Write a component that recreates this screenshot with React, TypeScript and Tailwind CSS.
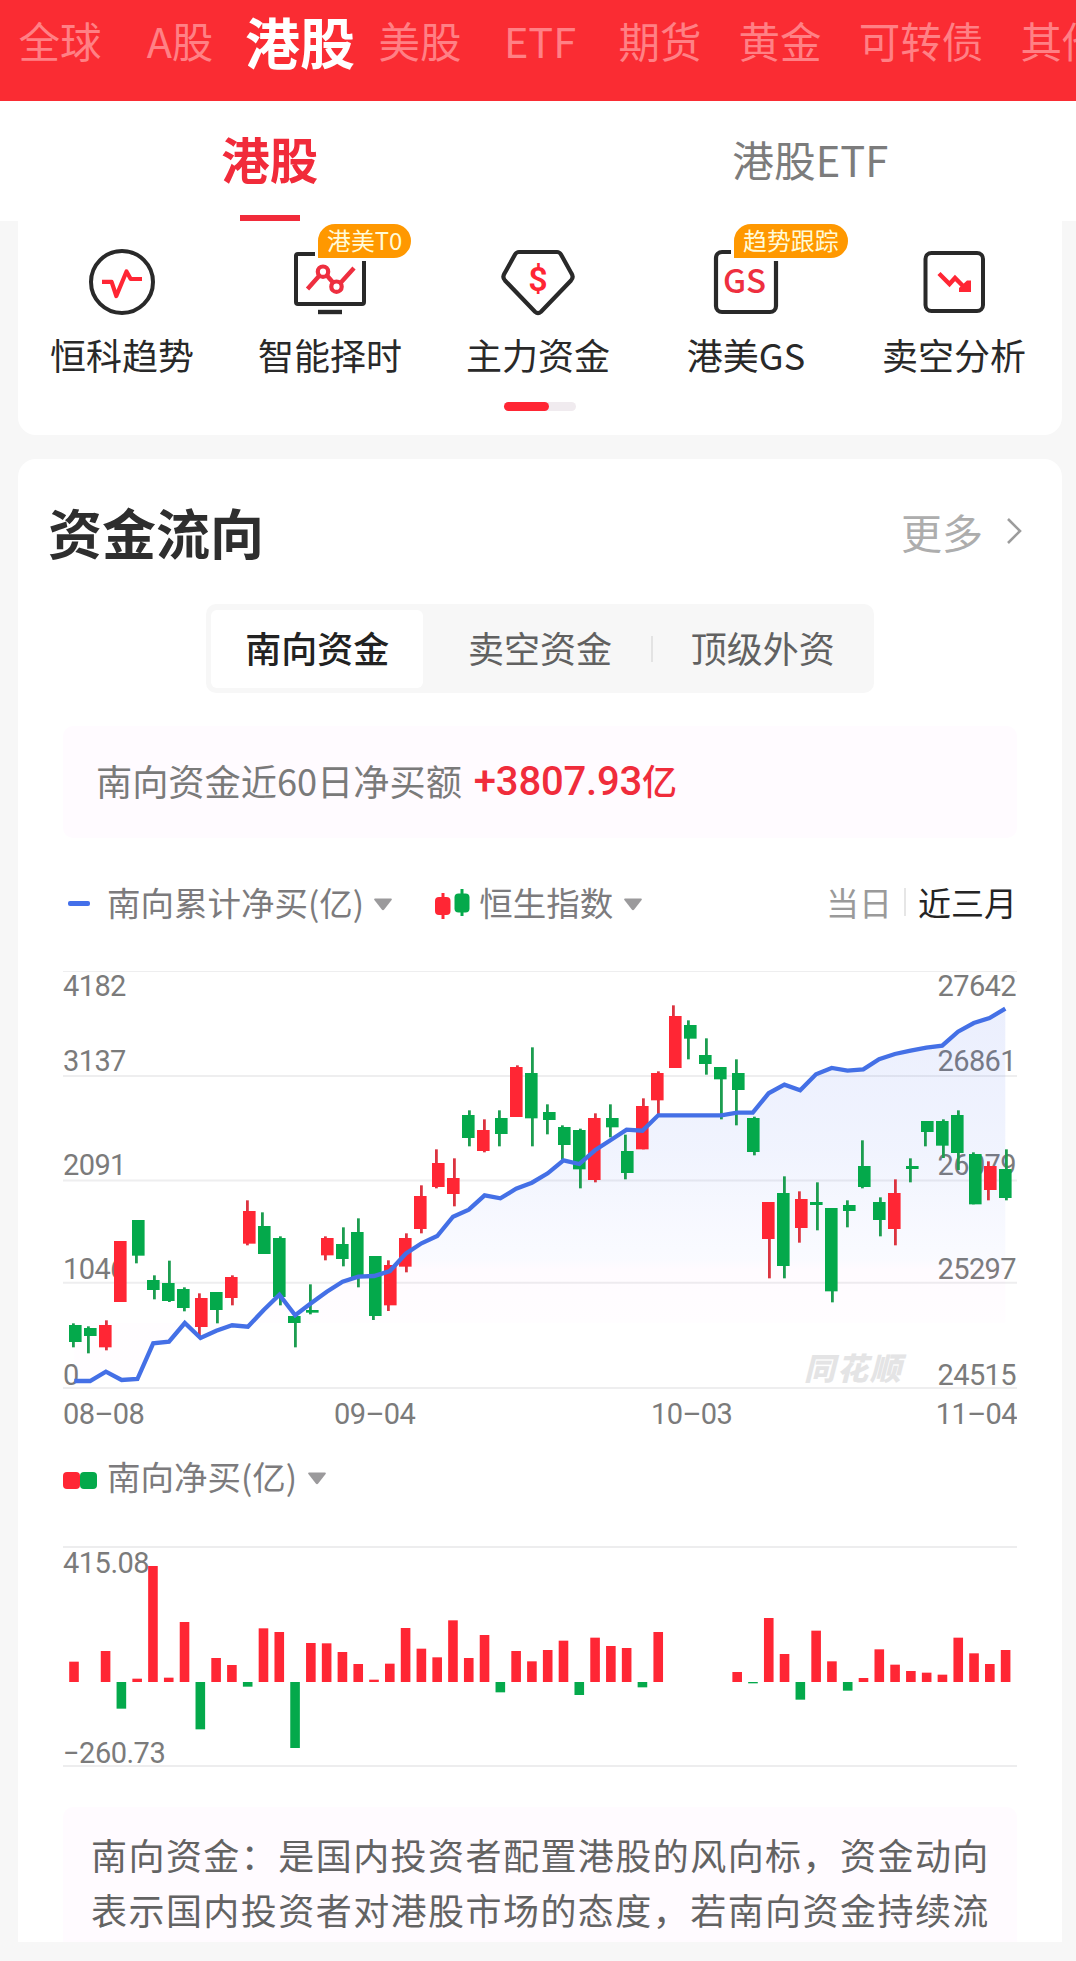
import { useState } from "react";
import type { ReactNode } from "react";
import { clsx } from "clsx";

const MARKETS = ["全球", "A股", "港股", "美股", "ETF", "期货", "黄金", "可转债", "其他"];
const FLOW_TABS = ["南向资金", "卖空资金", "顶级外资"];

// Chart geometry is kept in 3x device pixels, STEP and the x origins in css pixels
const STEP = 15.79;

type Candle = [up: 0 | 1, high: number, top: number, bottom: number, low: number];

const CANDLES: Candle[] = [
  [0, 1120, 1125, 1176, 1192], [0, 1129, 1134, 1158, 1210], [1, 1111, 1125, 1192, 1201],
  [1, 873, 873, 1056, 1056],   [0, 810, 810, 917, 940],     [0, 976, 990, 1020, 1048],
  [0, 932, 999, 1053, 1056],   [0, 1012, 1017, 1074, 1084], [1, 1030, 1044, 1131, 1160],
  [0, 1026, 1026, 1080, 1120], [1, 976, 981, 1044, 1066],   [1, 751, 783, 881, 886],
  [0, 787, 828, 912, 912],     [0, 859, 864, 1041, 1066],   [0, 1090, 1098, 1119, 1192],
  [0, 1003, 1080, 1088, 1093], [1, 859, 864, 916, 931],     [0, 832, 882, 927, 949],
  [0, 805, 846, 981, 1012],    [0, 918, 918, 1098, 1110],   [1, 931, 945, 1066, 1083],
  [1, 850, 864, 950, 967],     [1, 706, 738, 837, 850],     [1, 598, 639, 711, 715],
  [1, 625, 684, 732, 769],     [0, 481, 495, 564, 589],     [1, 508, 540, 603, 607],
  [0, 481, 504, 552, 589],     [1, 346, 351, 501, 501],     [0, 292, 369, 505, 589],
  [0, 463, 486, 510, 553],     [0, 526, 531, 585, 630],     [0, 536, 540, 658, 715],
  [1, 490, 504, 690, 697],     [0, 463, 504, 532, 562],     [0, 554, 603, 669, 688],
  [1, 445, 468, 598, 598],     [1, 364, 369, 451, 495],     [1, 166, 198, 354, 354],
  [0, 211, 225, 266, 328],     [0, 265, 315, 342, 374],     [0, 351, 351, 388, 508],
  [0, 328, 369, 420, 526],     [0, 500, 504, 606, 616],     [1, 756, 756, 867, 985],
  [0, 679, 729, 948, 985],     [1, 724, 747, 834, 878],     [0, 697, 756, 765, 841],
  [0, 774, 774, 1024, 1057],   [0, 751, 765, 783, 832],     [0, 571, 648, 711, 715],
  [0, 742, 756, 810, 859],     [1, 688, 729, 837, 886],     [0, 625, 648, 657, 697],
  [0, 513, 513, 546, 589],     [0, 508, 513, 587, 624],     [0, 481, 495, 609, 660],
  [0, 607, 612, 763, 763],     [1, 634, 648, 720, 751],     [0, 598, 657, 744, 751],
];

const NET_TOTAL = [
  1293, 1293, 1265, 1290, 1287, 1180, 1175, 1119, 1164, 1142, 1126, 1130, 1080, 1034, 1096,
  1060, 1025, 995, 980, 978, 963, 911, 880, 858, 800, 779, 736, 745, 716, 698,
  670, 631, 642, 601, 570, 539, 542, 496, 496, 496, 496, 496, 488, 488, 430,
  404, 421, 373, 354, 362, 358, 328, 312, 302, 293, 287, 245, 219, 204, 176,
];

const NET_DAILY = [
  61, 0, 93, -80, 10, 348, 13, 180, -142, 72, 51, -14, 161, 150, -198,
  117, 116, 90, 54, 7, 55, 162, 100, 74, 185, 72, 141, -31, 93, 62,
  96, 124, -39, 133, 108, 102, -16, 150, 0, 0, 0, 0, 30, -4, 192,
  84, -53, 154, 62, -26, 12, 98, 52, 33, 28, 22, 133, 86, 54, 96,
];

const RED = "#ff2634";
const GREEN = "#04a94b";

function HeartbeatIcon() {
  return (
    <svg width="80" height="76" viewBox="0 0 80 76" fill="none">
      <circle cx="40" cy="38" r="31" stroke="#292929" strokeWidth="4" />
      <path d="M20 37.8h9.6L34.3 52 44.5 27.5l4.2 7.5H60" stroke={RED} strokeWidth="4.2" strokeLinejoin="round" />
    </svg>
  );
}

function MonitorIcon() {
  return (
    <svg width="80" height="76" viewBox="0 0 80 76" fill="none">
      <rect x="6" y="10" width="68" height="50" rx="2" stroke="#292929" strokeWidth="4" />
      <path d="M28 68h24" stroke="#292929" strokeWidth="4.4" />
      <path d="M17.5 45 29.5 31.5M36.5 31 43 38.5M50 39.5 64 24" stroke="#ee2f3f" strokeWidth="4.4" />
      <circle cx="33" cy="27.7" r="5.2" stroke="#ee2f3f" strokeWidth="4.2" />
      <circle cx="46.5" cy="42.7" r="5.2" stroke="#ee2f3f" strokeWidth="4.2" />
    </svg>
  );
}

function DiamondIcon() {
  return (
    <svg width="80" height="76" viewBox="0 0 80 76" fill="none">
      <path
        d="M21 8H59Q61.5 8 63 10.5L73.5 29.5Q76 33 73 36.5L43 67.8Q40 70.5 37 67.8L7 36.5Q4 33 6.5 29.5L17 10.5Q18.5 8 21 8Z"
        stroke="#292929"
        strokeWidth="4.2"
      />
      <text x="40" y="46.5" textAnchor="middle" fill={RED} fontSize="34" fontWeight="600" fontFamily="Roboto, sans-serif">$</text>
    </svg>
  );
}

function GsIcon() {
  return (
    <svg width="80" height="76" viewBox="0 0 80 76" fill="none">
      <rect x="10" y="8" width="60" height="60" rx="6" stroke="#292929" strokeWidth="4.2" />
      <text x="38.5" y="49" textAnchor="middle" fill="#ee2f3f" fontSize="33" fontWeight="500" fontFamily="'Noto Sans CJK SC', sans-serif">GS</text>
    </svg>
  );
}

function ShortIcon() {
  return (
    <svg width="80" height="76" viewBox="0 0 80 76" fill="none">
      <rect x="11.5" y="9" width="57.5" height="58" rx="6" stroke="#292929" strokeWidth="4" />
      <path d="M25 29.5 35.5 40 41 34 50.5 43.5" stroke={RED} strokeWidth="4.4" />
      <path d="M53 36.5h4V48H45v-4Z" fill={RED} />
    </svg>
  );
}

interface Shortcut {
  label: string;
  icon: ReactNode;
  badge?: string;
}

const SHORTCUTS: Shortcut[] = [
  { label: "恒科趋势", icon: <HeartbeatIcon /> },
  { label: "智能择时", icon: <MonitorIcon />, badge: "港美T0" },
  { label: "主力资金", icon: <DiamondIcon /> },
  { label: "港美GS",   icon: <GsIcon />, badge: "趋势跟踪" },
  { label: "卖空分析", icon: <ShortIcon /> },
];

function Caret({ className }: { className?: string }) {
  return (
    <svg className={className} width="20" height="13" viewBox="0 0 20 13">
      <path d="M2 .5h16q1.6 0 .6 1.5L11.2 11.6q-1.2 1.4-2.4 0L1.4 2Q.4.5 2 .5Z" fill="#9b9a9c" />
    </svg>
  );
}

function FlowChart() {
  const y = (v: number) => v / 3 - 15;
  const points = NET_TOTAL.map((v, i) => `${(11.3 + i * 15.78).toFixed(1)},${y(v).toFixed(1)}`).join(" ");

  return (
    <svg className="block" width="954" height="470" viewBox="0 0 954 470" fontFamily="Roboto, sans-serif" fontSize="29">
      <defs>
        <linearGradient id="flow" x1="0" y1="43" x2="0" y2="358" gradientUnits="userSpaceOnUse">
          <stop offset="0" stopColor="#4a6cf0" stopOpacity="0.11" />
          <stop offset="0.45" stopColor="#4a72f5" stopOpacity="0.08" />
          <stop offset="0.8" stopColor="#6a82ff" stopOpacity="0.035" />
          <stop offset="0.83" stopColor="#ff60ff" stopOpacity="0.025" />
          <stop offset="1" stopColor="#ff60ff" stopOpacity="0.012" />
        </linearGradient>
      </defs>

      <g stroke="#eeeeef" strokeWidth="2">
        <path d="M0 6.5H954" strokeWidth="1" />
        <path d="M0 111H954M0 215.5H954M0 317.7H954M0 423H954" />
      </g>

      <g fill="#7b7b7b" letterSpacing="-0.6">
        <text x="0" y="30.5">4182</text>
        <text x="0" y="105.5">3137</text>
        <text x="0" y="209.5">2091</text>
        <text x="0" y="313.5">1046</text>
        <text x="0" y="419.5">0</text>
        <g textAnchor="end">
          <text x="953" y="30.5">27642</text>
          <text x="953" y="105.5">26861</text>
          <text x="953" y="209.5">26079</text>
          <text x="953" y="313.5">25297</text>
          <text x="953" y="419.5">24515</text>
        </g>
        <text x="0" y="458.5">08–08</text>
        <text x="271" y="458.5">09–04</text>
        <text x="588" y="458.5">10–03</text>
        <text x="954" y="458.5" textAnchor="end">11–04</text>
      </g>

      <text x="741" y="415" fill="#e4e4e5" fontSize="31" fontWeight="900" fontStyle="italic" textLength="97" fontFamily="'Noto Sans CJK SC', sans-serif">同花顺</text>

      <polygon points={`11.3,358 ${points} 942.3,358`} fill="url(#flow)" />

      {CANDLES.map(([up, high, top, bottom, low], i) => {
        const x = 3 * Math.floor((69.35 + STEP * i) / 3) - 63;
        const wick = 3 * Math.floor((74.1 + STEP * i) / 3) - 63;
        return (
          <g key={i} fill={up ? RED : GREEN}>
            <rect x={wick} y={y(high)} width="2.8" height={(low - high) / 3} fill={up ? "#dc3440" : "#1c9d50"} />
            <rect x={x} y={y(top)} width="12.6" height={Math.max((bottom - top) / 3, 2)} />
          </g>
        );
      })}

      <polyline points={points} fill="none" stroke="#4470e6" strokeWidth="4.3" />
    </svg>
  );
}

function NetBuyChart() {
  return (
    <svg className="block" width="954" height="228" viewBox="0 0 954 228" fontFamily="Roboto, sans-serif" fontSize="29">
      <path d="M0 2H954M0 221H954" stroke="#ededee" strokeWidth="2" />
      <g fill="#7b7b7b" letterSpacing="-0.5">
        <text x="0" y="27.7">415.08</text>
        <text x="0" y="218.3">−260.73</text>
      </g>
      {NET_DAILY.map((v, i) =>
        v === 0 ? null : (
          <rect
            key={i}
            x={6.2 + STEP * i}
            y={v > 0 ? 137 - v / 3 : 137}
            width="9.6"
            height={Math.abs(v) / 3}
            fill={v > 0 ? RED : GREEN}
          />
        )
      )}
    </svg>
  );
}

export default function App() {
  const [market, setMarket] = useState("港股");
  const [flow,   setFlow]   = useState("南向资金");

  return (
    <div className="w-[1076px] h-[1961px] overflow-hidden bg-[#f7f7f7] font-['Noto_Sans_CJK_SC',sans-serif]">
      {/* Markets */}
      <nav className="flex h-[101px] items-start overflow-hidden bg-[#fa2c33]">
        {MARKETS.map((name) => (
          <button
            key={name}
            onClick={() => setMarket(name)}
            className={clsx(
              "h-[80px] shrink-0 whitespace-nowrap text-center",
              name === "可转债" ? "w-[162px]" : "w-[120px]",
              name === market ? "text-[55px] leading-[79px] font-bold text-white" : "text-[41.5px] leading-[80px] text-[#ff8085]"
            )}
          >
            {name}
          </button>
        ))}
      </nav>

      {/* Sub tabs */}
      <div className="grid h-[120px] grid-cols-2 bg-white pl-[1px]">
        <div className="flex flex-col items-center justify-between">
          <span className="mt-[9px] text-[48.5px] leading-[96px] font-bold text-[#f12b3a]">港股</span>
          <span className="h-[6px] w-[60px] bg-[#f12b3a]" />
        </div>
        <div className="pl-[6px] text-center">
          <span className="mt-[10px] block text-[41.7px] leading-[96px] text-[#7c7c7c]">港股ETF</span>
        </div>
      </div>

      {/* Shortcuts */}
      <section className="ml-[18px] h-[214px] w-[1044px] rounded-b-[18px] bg-white">
        <div className="flex pt-[23px]">
          {SHORTCUTS.map(({ label, icon, badge }) => (
            <div key={label} className="relative flex w-[208px] flex-col items-center">
              {icon}
              {badge && (
                <span className="absolute -top-[23px] left-[89px] h-[40px] rounded-[20px] rounded-bl-none border-[3px] border-white bg-[#ff9800] px-[9px] text-[23.9px] leading-[32px] whitespace-nowrap text-[#fffbd9]">
                  {badge}
                </span>
              )}
              <span className="mt-[8px] text-[36px] leading-[52px] text-[#292929]">{label}</span>
            </div>
          ))}
        </div>
        <div className="mx-auto mt-[22px] h-[9px] w-[72px] rounded-full bg-[#f0ebef]">
          <div className="h-[9px] w-[45px] rounded-full bg-[#ff2634]" />
        </div>
      </section>

      {/* Capital flow */}
      <section className="mt-[24px] ml-[18px] h-[1483px] w-[1044px] overflow-hidden rounded-t-[18px] bg-white">
        <header className="flex h-[145px] items-center justify-between pr-[39px] pl-[30px]">
          <h2 className="text-[54px] leading-none font-bold text-[#2e2e2e]">资金流向</h2>
          <div className="flex items-center gap-[22px] text-[41px] leading-none text-[#adadad]">
            <span className="-mt-[1px]">更多</span>
            <svg className="-mt-[2px]" width="18" height="28" viewBox="0 0 18 28" fill="none">
              <path d="M3 2 15 14 3 26" stroke="#9c9c9c" strokeWidth="2.6" />
            </svg>
          </div>
        </header>

        <div className="mx-auto grid h-[89px] w-[668px] grid-cols-3 rounded-[10px] bg-[#f7f7f7] text-[36px] leading-[75px]">
          {FLOW_TABS.map((name, i) => (
            <button
              key={name}
              onClick={() => setFlow(name)}
              className={clsx("flex items-center justify-center", i === 2 && "relative")}
            >
              {i === 2 && <span className="absolute top-[32px] left-0 h-[26px] w-[2px] bg-[#e3e3e3]" />}
              <span
                className={clsx(
                  "h-[78px] w-[212px] rounded-[6px]",
                  name === flow ? "bg-white font-medium text-[#222]" : "text-[#616161]"
                )}
              >
                {name}
              </span>
            </button>
          ))}
        </div>

        <div className="mx-auto w-[954px]">
          <div className="mt-[33px] flex h-[112px] items-center rounded-[10px] bg-[#fffbff] pb-[3px] pl-[33px] text-[36.2px] text-[#7a7a7a]">
            南向资金近60日净买额
            <span className="mt-[2px] ml-[12px] font-['Roboto','Noto_Sans_CJK_SC',sans-serif] text-[40px] font-medium tracking-[-0.2px] text-[#f02c3b]">
              +3807.93<span className="text-[35px]">亿</span>
            </span>
          </div>

          <div className="mt-[39px] flex h-[50px] items-center text-[33.5px] leading-[48px] text-[#7c7b7d]">
            <span className="mt-[2px] ml-[5px] h-[5px] w-[22px] rounded-[2px] bg-[#4470ea]" />
            <span className="ml-[17px]">南向累计净买(亿)</span>
            <Caret className="mt-[4px] ml-[9px]" />
            <svg className="mt-[3px] ml-[41px]" width="36" height="32" viewBox="0 0 36 32">
              <path d="M7.5 5h3v26h-3Z" fill={RED} />
              <rect x="1" y="9" width="15.5" height="18" rx="4" fill={RED} />
              <path d="M26.5 1h3v27h-3Z" fill={GREEN} />
              <rect x="20.5" y="5.5" width="15" height="19" rx="4" fill={GREEN} />
            </svg>
            <span className="ml-[9px]">恒生指数</span>
            <Caret className="mt-[4px] ml-[10px]" />
            <span className="ml-auto text-[33px] text-[#9a9a9a]">当日</span>
            <span className="mx-[12px] h-[28px] w-[2px] bg-[#e6e6e6]" />
            <span className="text-[33px] text-[#242424]">近三月</span>
          </div>

          <div className="mt-[38px]">
            <FlowChart />
          </div>

          <div className="mt-[17px] flex h-[50px] items-center text-[33.5px] leading-[46px] text-[#7c7b7d]">
            <span className="mt-[6px] size-[17px] rounded-[4px] bg-[#ff2634]" />
            <span className="mt-[6px] size-[17px] rounded-[4px] bg-[#04a94b]" />
            <span className="-mt-[3px] ml-[10px]">南向净买(亿)</span>
            <Caret className="mt-[2px] ml-[10px]" />
          </div>

          <div className="mt-[43px]">
            <NetBuyChart />
          </div>

          <p className="mt-[34px] h-[160px] rounded-[10px] bg-[#fffbff] pt-[20px] pl-[28px] text-[36px] leading-[55px] tracking-[1.45px] whitespace-nowrap text-[#636363]">
            南向资金：是国内投资者配置港股的风向标，资金动向
            <br />
            表示国内投资者对港股市场的态度，若南向资金持续流
          </p>
        </div>
      </section>
    </div>
  );
}
